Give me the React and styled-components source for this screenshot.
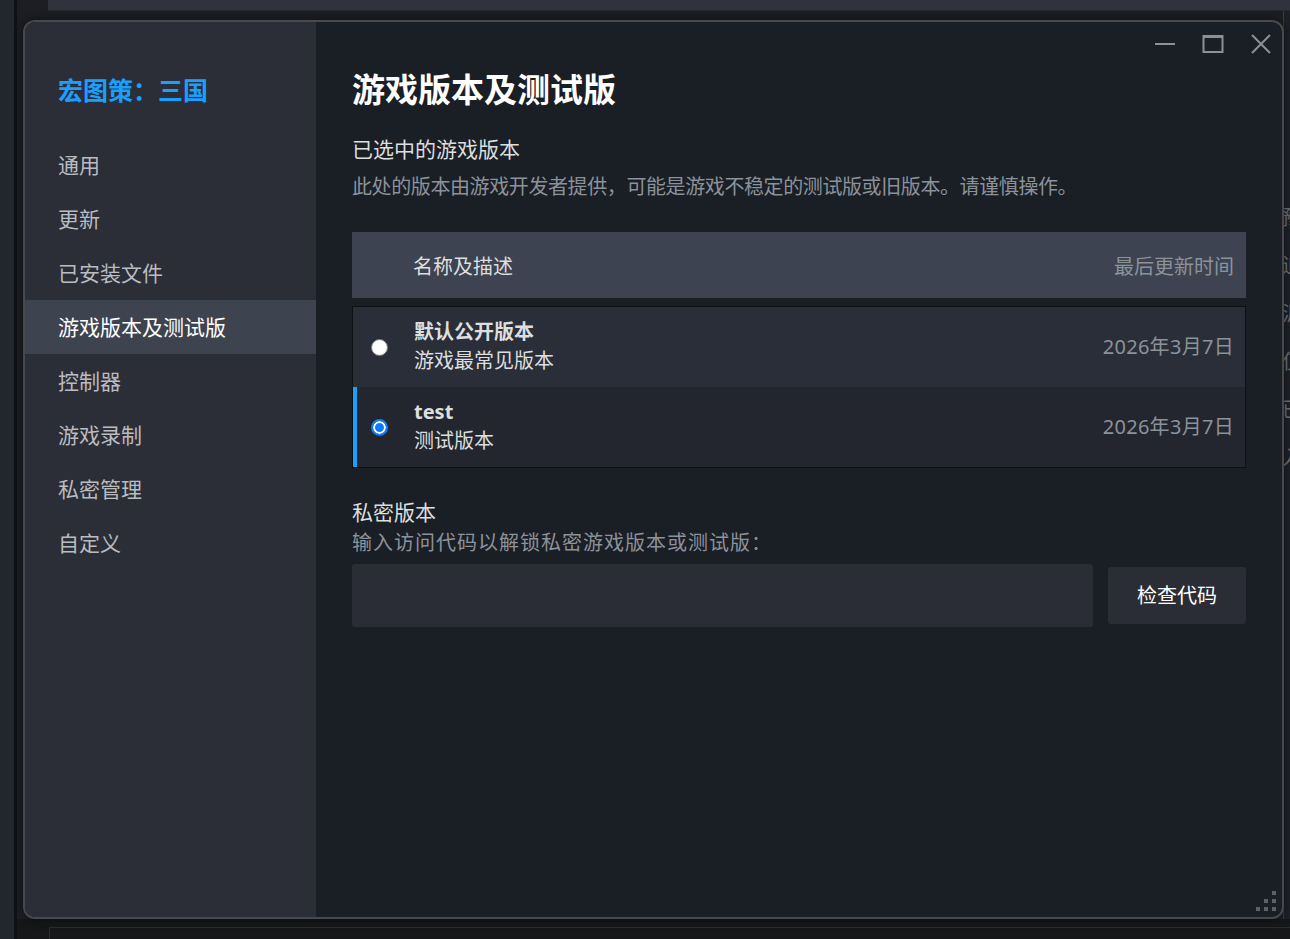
import React, { useState } from 'react'
import styled, { createGlobalStyle } from 'styled-components'

const GlobalStyle = createGlobalStyle`
  html, body {
    margin: 0;
    padding: 0;
    background: #1b1d22;
  }
  body {
    font-family: "Noto Sans", "Noto Sans CJK SC", sans-serif;
  }
`

const navItems = ['通用', '更新', '已安装文件', '游戏版本及测试版', '控制器', '游戏录制', '私密管理', '自定义']

const branches = [
  { id: 'public', name: '默认公开版本', desc: '游戏最常见版本', date: '2026年3月7日' },
  { id: 'test', name: 'test', desc: '测试版本', date: '2026年3月7日' },
]

const App = () => {
  let [active, setActive] = useState(3)
  let [branch, setBranch] = useState('test')

  return (
    <>
      <GlobalStyle />
      <Desktop>
        <LeftRail />
        <RailEdge />
        <BackWindow>
          <BackTopBar />
          <BackBody>
            <BackSide>
              <span>豫</span>
              <span>迫</span>
              <span>泥</span>
              <span>仅</span>
              <span>已</span>
              <span>入</span>
            </BackSide>
          </BackBody>
          <BackBottom>
            <BackBox />
          </BackBottom>
        </BackWindow>

        <Dialog>
          <Sidebar>
            <GameTitle>宏图策：三国</GameTitle>
            <NavList>
              {navItems.map((name, idx) => (
                <NavItem key={name} $active={idx === active} onClick={() => setActive(idx)}>
                  {name}
                </NavItem>
              ))}
            </NavList>
          </Sidebar>

          <Main>
            <TitleBar>
              <WinButton aria-label="minimize">
                <svg width="22" height="20" viewBox="0 0 22 20">
                  <rect x="1" y="9" width="20" height="2" fill="#8d9095" />
                </svg>
              </WinButton>
              <WinButton aria-label="maximize">
                <svg width="22" height="20" viewBox="0 0 22 20">
                  <rect x="1.5" y="2" width="19" height="16" fill="none" stroke="#8d9095" strokeWidth="2" />
                  <rect x="1" y="1" width="20" height="3" fill="#8d9095" />
                </svg>
              </WinButton>
              <WinButton aria-label="close">
                <svg width="22" height="20" viewBox="0 0 22 20">
                  <path d="M2 1 L20 19 M20 1 L2 19" stroke="#8d9095" strokeWidth="2" />
                </svg>
              </WinButton>
            </TitleBar>

            <Heading>游戏版本及测试版</Heading>
            <SectionTitle>已选中的游戏版本</SectionTitle>
            <Hint>此处的版本由游戏开发者提供，可能是游戏不稳定的测试版或旧版本。请谨慎操作。</Hint>

            <TableHead>
              <span>名称及描述</span>
              <HeadRight>最后更新时间</HeadRight>
            </TableHead>

            <Rows>
              {branches.map((b, i) => (
                <Row key={b.id} $selected={branch === b.id} $alt={i % 2 === 1} onClick={() => setBranch(b.id)}>
                  <RadioCell>
                    <Radio $checked={branch === b.id} />
                  </RadioCell>
                  <RowText>
                    <RowName>{b.name}</RowName>
                    <RowDesc>{b.desc}</RowDesc>
                  </RowText>
                  <RowDate>{b.date}</RowDate>
                </Row>
              ))}
            </Rows>

            <PrivateTitle>私密版本</PrivateTitle>
            <PrivateHint>输入访问代码以解锁私密游戏版本或测试版：</PrivateHint>
            <CodeRow>
              <CodeInput type="text" />
              <CheckButton>检查代码</CheckButton>
            </CodeRow>
          </Main>

          <Grip>
            <svg width="22" height="22" viewBox="0 0 22 22">
              <rect x="16" y="0" width="4" height="4" fill="#5d6068" />
              <rect x="8" y="8" width="4" height="4" fill="#5d6068" />
              <rect x="16" y="8" width="4" height="4" fill="#5d6068" />
              <rect x="0" y="16" width="4" height="4" fill="#5d6068" />
              <rect x="8" y="16" width="4" height="4" fill="#5d6068" />
              <rect x="16" y="16" width="4" height="4" fill="#5d6068" />
            </svg>
          </Grip>
        </Dialog>
      </Desktop>
    </>
  )
}

let Desktop = styled.div`
  position: relative;
  width: 1290px;
  height: 939px;
  overflow: hidden;
  display: grid;
  grid-template-columns: 14px 3px 1fr;
  background: #1b1d22;
`

let LeftRail = styled.div`
  background: #22262d;
`

let RailEdge = styled.div`
  background: #101114;
`

let BackWindow = styled.div`
  display: grid;
  grid-template-rows: 11px 1fr 20px;
  background: #1c1e23;
`

let BackTopBar = styled.div`
  margin-left: 31px;
  background: #30333b;
  border-bottom: 1px solid #26282e;
`

let BackBody = styled.div`
  display: flex;
  justify-content: flex-end;
`

let BackSide = styled.div`
  width: 6px;
  padding-top: 196px;
  display: flex;
  flex-direction: column;
  gap: 28px;
  overflow: hidden;
  background: #1d2027;
  border-left: 1px solid #3a3c41;
  color: #6e7176;
  font-family: "Noto Sans CJK SC", sans-serif;
  font-size: 20px;
  line-height: 20px;
  span {
    display: block;
    width: 20px;
    margin-left: -2px;
  }
`

let BackBottom = styled.div`
  background: #161719;
  padding: 8px 0 0 32px;
`

let BackBox = styled.div`
  height: 100%;
  border: 1px solid #2a2c31;
  border-bottom: none;
  border-right: none;
`

let Dialog = styled.section`
  position: absolute;
  left: 23px;
  top: 20px;
  width: 1261px;
  height: 899px;
  box-sizing: border-box;
  display: grid;
  grid-template-columns: 291px 1fr;
  border: 2px solid #47494d;
  border-radius: 12px;
  overflow: hidden;
  background: #1a1e25;
  box-shadow: 0 0 10px rgba(0, 0, 0, 0.5);
`

let Sidebar = styled.aside`
  background: #2b2e36;
  padding-top: 49px;
  font-family: "Noto Sans CJK SC", sans-serif;
`

let GameTitle = styled.h1`
  margin: 0 0 31px 33px;
  font-size: 25px;
  line-height: 36px;
  font-weight: 700;
  color: #1a9fff;
`

let NavList = styled.nav`
  display: flex;
  flex-direction: column;
`

let NavItem = styled.a`
  display: flex;
  align-items: center;
  height: 54px;
  padding-left: 33px;
  padding-bottom: 2px;
  box-sizing: border-box;
  font-size: 21px;
  color: ${(p) => (p.$active ? '#ffffff' : '#b9bcc0')};
  background: ${(p) => (p.$active ? '#3d4450' : 'transparent')};
  cursor: pointer;
  &:hover {
    color: #ffffff;
  }
`

let Main = styled.main`
  position: relative;
  padding: 0 36px;
  display: flex;
  flex-direction: column;
  font-family: "Noto Sans CJK SC", sans-serif;
`

let TitleBar = styled.div`
  height: 46px;
  margin-right: -26px;
  display: flex;
  justify-content: flex-end;
  align-items: flex-start;
  gap: 26px;
  padding-top: 12px;
  box-sizing: border-box;
`

let WinButton = styled.button`
  width: 22px;
  height: 20px;
  padding: 0;
  border: none;
  background: none;
  display: flex;
  cursor: pointer;
`

let Heading = styled.h2`
  margin: 0;
  font-size: 33px;
  line-height: 40px;
  font-weight: 700;
  color: #ffffff;
`

let SectionTitle = styled.div`
  margin-top: 26px;
  font-size: 21px;
  line-height: 28px;
  color: #dcdedf;
`

let Hint = styled.div`
  margin-top: 10px;
  font-size: 20px;
  line-height: 28px;
  letter-spacing: -0.4px;
  color: #8b929a;
`

let TableHead = styled.div`
  margin-top: 32px;
  height: 66px;
  display: flex;
  align-items: center;
  justify-content: space-between;
  padding: 0 12px 0 61px;
  background: #3d4350;
  font-size: 20px;
  color: #dcdedf;
`

let HeadRight = styled.span`
  color: #8b929a;
`

let Rows = styled.div`
  margin-top: 8px;
  border: 1px solid #0e1014;
  display: flex;
  flex-direction: column;
`

let Row = styled.div`
  height: 80px;
  display: grid;
  grid-template-columns: 61px 1fr auto;
  align-items: center;
  padding-right: 11px;
  background: ${(p) => (p.$alt ? '#23262e' : '#2a2e38')};
  box-shadow: ${(p) => (p.$selected ? 'inset 4px 0 0 #1a9fff' : 'none')};
  cursor: pointer;
`

let RadioCell = styled.div`
  display: flex;
  justify-content: center;
  padding-right: 8px;
`

let Radio = styled.span`
  width: 17px;
  height: 17px;
  box-sizing: border-box;
  border-radius: 50%;
  background: ${(p) => (p.$checked ? '#0b7cff' : '#ffffff')};
  border: ${(p) => (p.$checked ? '2px solid #0b7cff' : '1px solid #767676')};
  box-shadow: ${(p) => (p.$checked ? 'inset 0 0 0 2px #ffffff' : 'none')};
`

let RowText = styled.div`
  display: flex;
  flex-direction: column;
  padding-bottom: 2px;
`

let RowName = styled.span`
  font-family: "Noto Sans", "Noto Sans CJK SC", sans-serif;
  font-size: 20px;
  line-height: 28px;
  font-weight: 700;
  color: #dcdedf;
`

let RowDesc = styled.span`
  font-size: 20px;
  line-height: 28px;
  color: #dcdedf;
`

let RowDate = styled.span`
  font-family: "Noto Sans", "Noto Sans CJK SC", sans-serif;
  font-size: 20px;
  letter-spacing: 0.3px;
  padding-bottom: 4px;
  color: #8b929a;
`

let PrivateTitle = styled.div`
  margin-top: 29px;
  font-size: 21px;
  line-height: 28px;
  color: #dcdedf;
`

let PrivateHint = styled.div`
  margin-top: 3px;
  font-size: 20px;
  line-height: 28px;
  letter-spacing: 1px;
  color: #8b929a;
`

let CodeRow = styled.div`
  margin-top: 8px;
  display: flex;
  align-items: center;
  gap: 15px;
`

let CodeInput = styled.input`
  flex: 1;
  height: 63px;
  box-sizing: border-box;
  border: none;
  border-radius: 3px;
  background: #2a2d35;
  color: #ffffff;
  font-size: 20px;
  padding: 0 12px;
  outline: none;
`

let CheckButton = styled.button`
  width: 138px;
  height: 57px;
  border: none;
  border-radius: 3px;
  background: #2a2d35;
  color: #ffffff;
  font-family: "Noto Sans CJK SC", sans-serif;
  font-size: 20px;
  padding-bottom: 3px;
  cursor: pointer;
`

let Grip = styled.div`
  position: absolute;
  right: 4px;
  bottom: 4px;
  width: 22px;
  height: 22px;
  display: flex;
`

export default App
